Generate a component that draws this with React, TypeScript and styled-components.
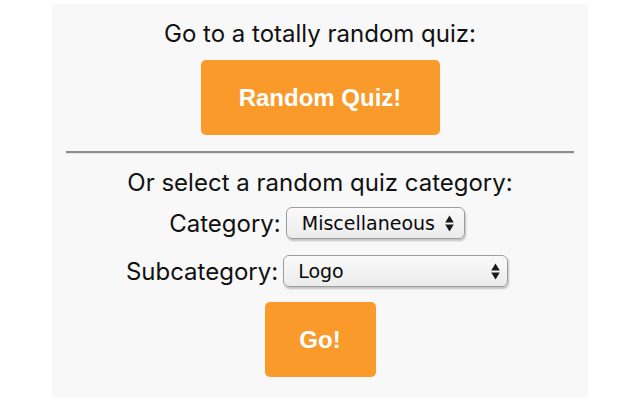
import React from 'react';
import styled, { createGlobalStyle } from 'styled-components';

const GlobalStyle = createGlobalStyle`
  html, body {
    margin: 0;
    padding: 0;
    background: #ffffff;
  }
  body {
    font-family: Inter, "Liberation Sans", Arial, sans-serif;
    color: #111;
  }
`;

const Page = styled.div`
  width: 640px;
  height: 400px;
  display: flex;
  justify-content: center;
  padding-top: 4px;
  box-sizing: border-box;
  overflow: hidden;
`;

const Panel = styled.div`
  width: 536px;
  height: 394px;
  background: #f8f8f8;
  padding: 16px 14px 0;
  box-sizing: border-box;
  display: flex;
  flex-direction: column;
  align-items: center;
`;

const Prompt = styled.div`
  font-size: 24px;
  line-height: 28px;
  font-weight: 400;
  text-align: center;
`;

const OrangeButton = styled.button<{ $wide?: boolean }>`
  height: 75px;
  width: ${(p) => (p.$wide ? '239px' : '111px')};
  background: #f99a2b;
  border: none;
  border-radius: 5px;
  color: #fff;
  font-family: "Liberation Sans", Arial, sans-serif;
  font-weight: 700;
  font-size: 24px;
  cursor: pointer;
  padding: 0;
`;

const Divider = styled.hr`
  width: 100%;
  margin: 0;
  border: none;
  border-top: 2px solid #8c8c8c;
  border-bottom: 1px solid #e4e4e4;
`;

const Row = styled.div`
  display: flex;
  align-items: center;
  gap: 5px;
  margin-right: 6px;
  font-size: 24px;
`;

const SelectWrap = styled.div<{ $width: number }>`
  position: relative;
  width: ${(p) => p.$width}px;
  height: 33px;
`;

const Select = styled.select<{ $pad: number }>`
  appearance: none;
  -webkit-appearance: none;
  width: 100%;
  height: 32px;
  border: 1px solid #9d9d9d;
  border-radius: 6px;
  background: linear-gradient(#fafafa, #ececec);
  box-shadow: 1px 2px 2px rgba(0, 0, 0, 0.22);
  font-family: "DejaVu Sans", Verdana, sans-serif;
  font-size: 19px;
  color: #0a0a0a;
  padding: 0 0 0 ${(p) => p.$pad}px;
  outline: none;
`;

const Arrows = styled.svg<{ $right: number }>`
  position: absolute;
  right: ${(p) => p.$right}px;
  top: 8px;
  pointer-events: none;
`;

const Spacer = styled.div<{ $h: number }>`
  height: ${(p) => p.$h}px;
  flex-shrink: 0;
`;

const UpDown: React.FC<{ right: number }> = ({ right }) => (
  <Arrows $right={right} width="9" height="17" viewBox="0 0 9 17">
    <path d="M4.5 0.5 L8.8 7.5 H0.2 Z" fill="#1a1a1a" />
    <path d="M4.5 16.5 L8.8 9.5 H0.2 Z" fill="#1a1a1a" />
  </Arrows>
);

const App: React.FC = () => {
  return (
    <>
      <GlobalStyle />
      <Page>
        <Panel>
          <Prompt>Go to a totally random quiz:</Prompt>
          <Spacer $h={12} />
          <OrangeButton $wide>Random Quiz!</OrangeButton>
          <Spacer $h={16} />
          <Divider />
          <Spacer $h={15} />
          <Prompt>Or select a random quiz category:</Prompt>
          <Spacer $h={10} />
          <Row>
            <span>Category:</span>
            <SelectWrap $width={179}>
              <Select $pad={15} defaultValue="Miscellaneous">
                <option>Miscellaneous</option>
              </Select>
              <UpDown right={11} />
            </SelectWrap>
          </Row>
          <Spacer $h={15} />
          <Row>
            <span>Subcategory:</span>
            <SelectWrap $width={225}>
              <Select $pad={14} defaultValue="Logo">
                <option>Logo</option>
              </Select>
              <UpDown right={8} />
            </SelectWrap>
          </Row>
          <Spacer $h={14} />
          <OrangeButton>Go!</OrangeButton>
        </Panel>
      </Page>
    </>
  );
};

export default App;
